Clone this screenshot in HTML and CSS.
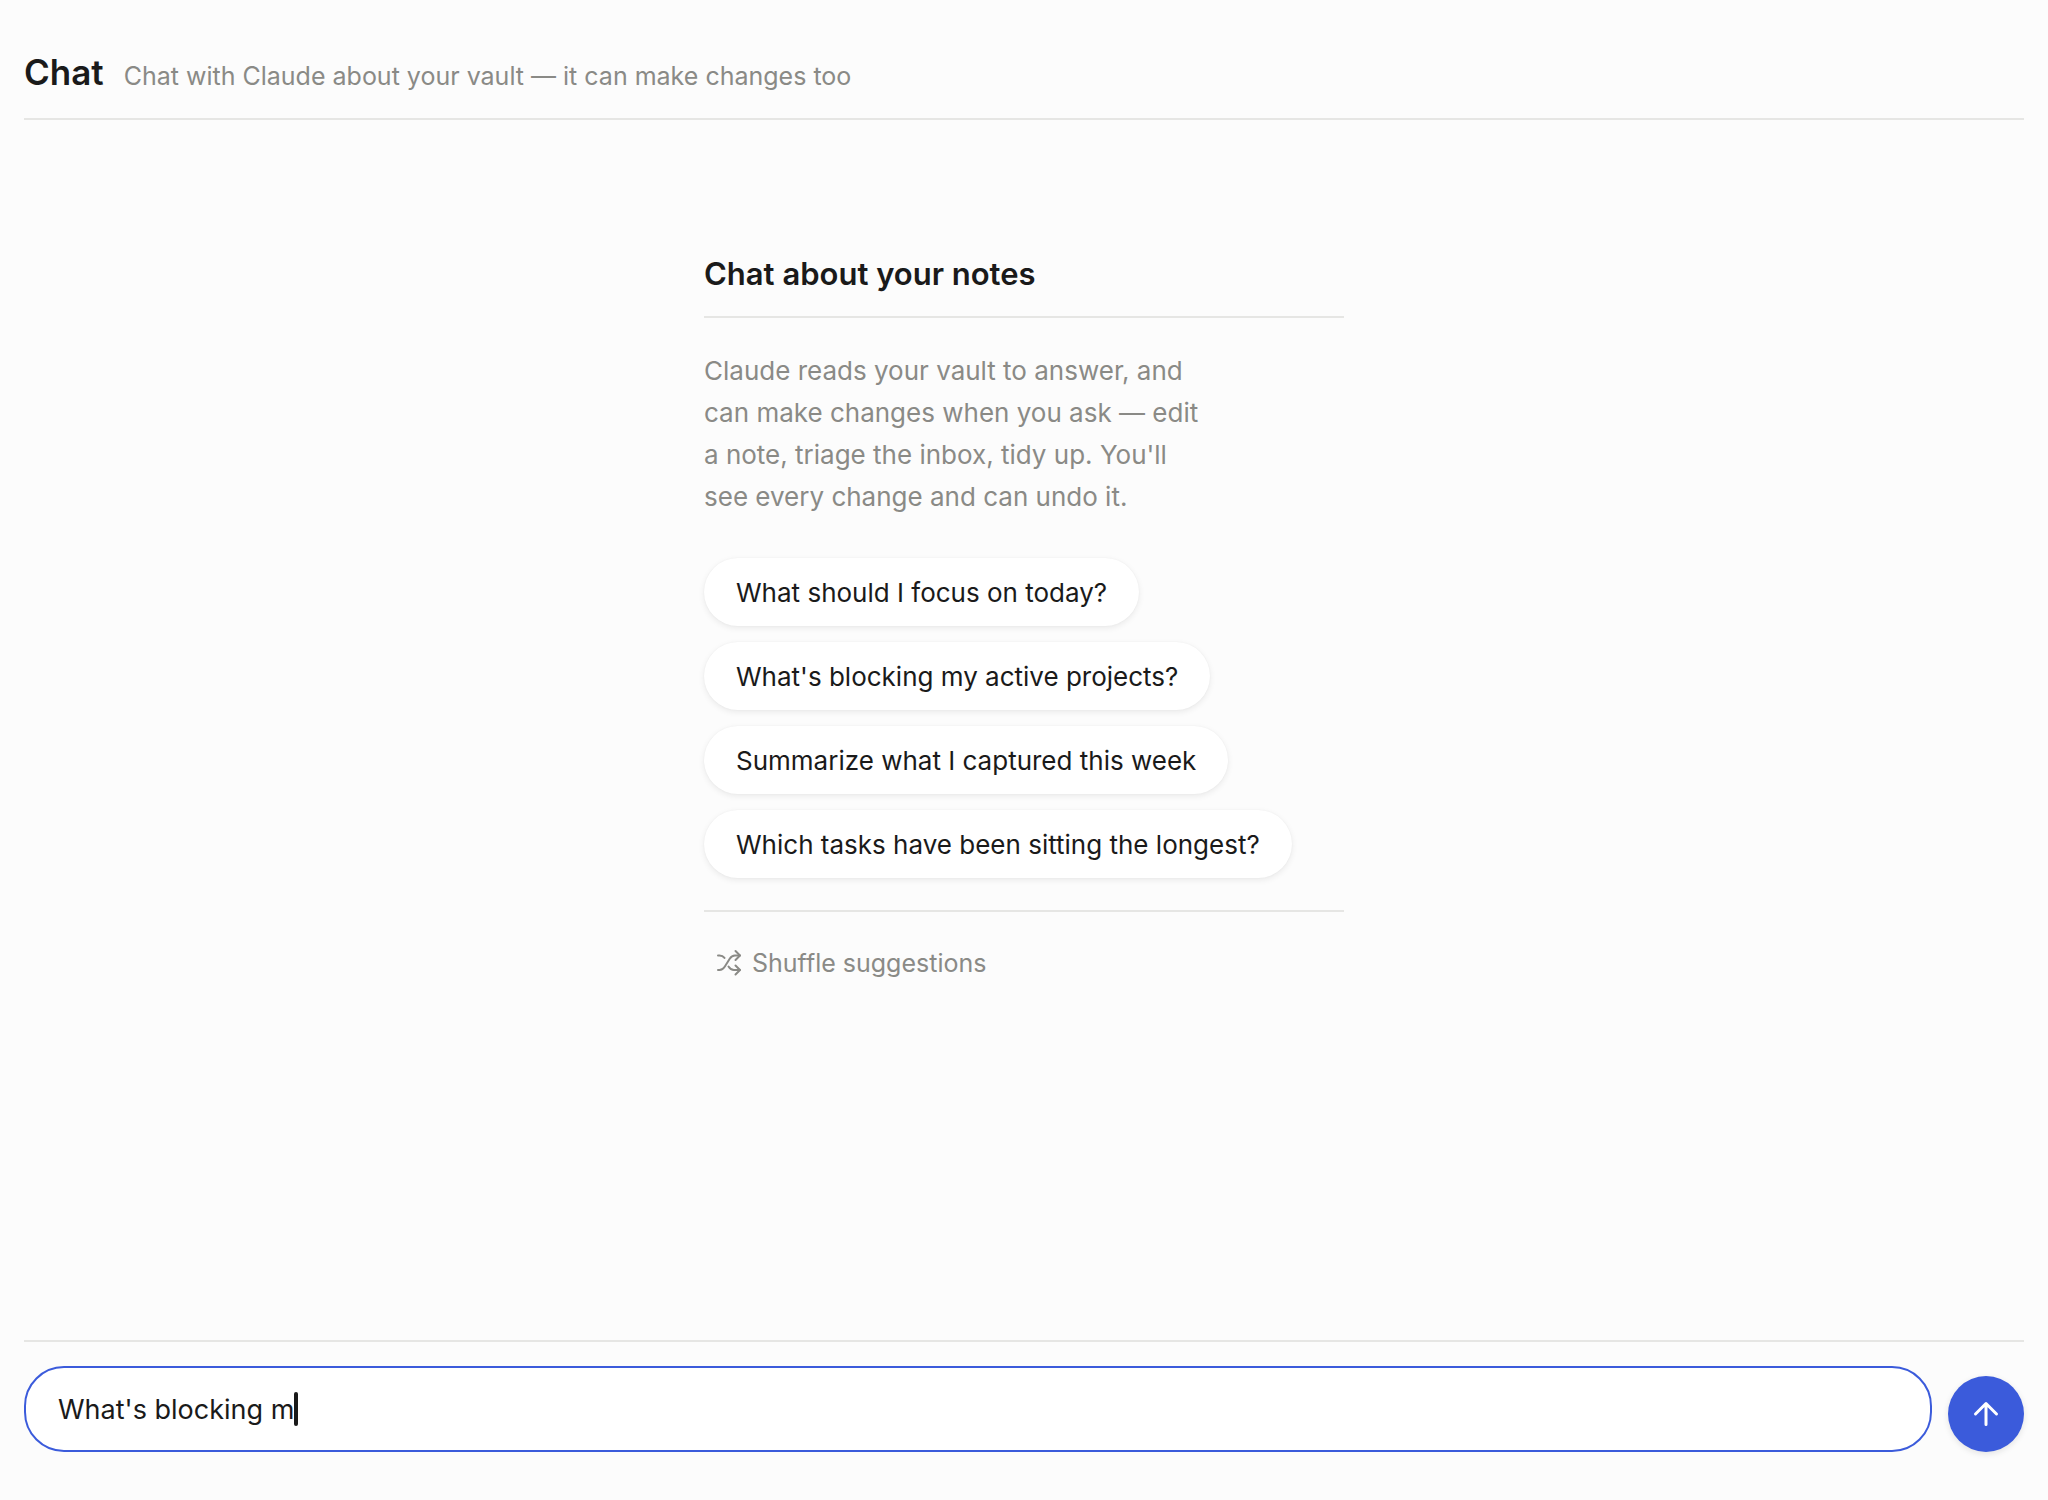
FILE: index.html
```html
<!DOCTYPE html>
<html lang="en">
  <head>
    <meta charset="utf-8">
    <meta name="viewport" content="width=device-width, initial-scale=1">
    <title>Chat</title>
    <link rel="stylesheet" href="styles.css">
  </head>
  <body>
    <header class="page-header">
      <h1>Chat</h1>
      <p>Chat with Claude about your vault — it can make changes too</p>
    </header>

    <main class="thread">
      <section class="empty">
        <h2>Chat about your notes</h2>
        <p class="intro">Claude reads your vault to answer, and can make changes when you ask — edit a note, triage the inbox, tidy up. You'll see every change and can undo it.</p>

        <div class="suggestions">
          <button type="button" class="pill">What should I focus on today?</button>
          <button type="button" class="pill">What's blocking my active projects?</button>
          <button type="button" class="pill">Summarize what I captured this week</button>
          <button type="button" class="pill">Which tasks have been sitting the longest?</button>
        </div>

        <button type="button" class="shuffle">
          <svg class="icon" viewBox="0 0 24 24" aria-hidden="true">
            <path d="M1 4.500h1.500c2.200 0 3.800.8 5 2.400"/>
            <path d="M1 19h1.500c2.400 0 4-1.300 5.200-3.200l5-8c1.300-2 2.900-3.300 5.200-3.300h5"/>
            <path d="M11.500 15.500c1.400 2.200 3 3.500 5.400 3.500h6"/>
            <path d="M18.500 0l4.500 4.500-4.500 4.500M18.500 14.500l4.500 4.500-4.500 4.500"/>
          </svg>
          Shuffle suggestions
        </button>
      </section>
    </main>

    <form class="composer">
      <label class="field">
        <input type="text" value="What's blocking m" aria-label="Message">
        <span class="caret"></span>
      </label>
      <button type="button" class="send" aria-label="Send">
        <svg class="icon" viewBox="0 0 24 24" aria-hidden="true">
          <path d="M12 22.500V1.500M1.500 12L12 1.500L22.500 12"/>
        </svg>
      </button>
    </form>
  </body>
</html>
```

FILE: styles.css
```css
* {
  box-sizing: border-box;
}

body {
  margin: 0;
  min-height: 100vh;
  padding: 0 24px 48px;
  display: flex;
  flex-direction: column;
  background: #fcfcfc;
  color: #1a1a1a;
  font-family: Inter, "Liberation Sans", sans-serif;
  font-size: 26px;
}

h1, h2, p {
  margin: 0;
}

button, input {
  font: inherit;
  color: inherit;
}

button {
  border: none;
  cursor: pointer;
}

.icon {
  width: 24px;
  height: 24px;
  overflow: visible;
  fill: none;
  stroke: currentColor;
  stroke-width: 2;
  stroke-linecap: round;
  stroke-linejoin: round;
}

.page-header {
  display: flex;
  align-items: baseline;
  gap: 20px;
  padding: 50px 0 24px;
  border-bottom: 2px solid #e6e6e4;
}

.page-header h1 {
  font-size: 35px;
  line-height: 44px;
  font-weight: 600;
}

.page-header p {
  font-size: 25px;
  color: #8a8a86;
}

/* empty state */
.thread {
  flex: 1;
}

.empty {
  max-width: 640px;
  margin: 132px auto 0;
}

.empty h2 {
  padding-bottom: 20px;
  border-bottom: 2px solid #e6e6e4;
  font-size: 31px;
  line-height: 44px;
  font-weight: 600;
}

.intro {
  max-width: 508px;
  margin: 32px 0 40px;
  font-size: 26px;
  line-height: 42px;
  color: #8a8a86;
}

.suggestions {
  display: flex;
  flex-direction: column;
  align-items: flex-start;
  gap: 16px;
  padding-bottom: 32px;
  border-bottom: 2px solid #e6e6e4;
}

.pill {
  height: 68px;
  padding: 0 32px;
  border-radius: 34px;
  background: #fff;
  box-shadow: 0 2px 6px rgba(0, 0, 0, 0.08), 0 0 2px rgba(0, 0, 0, 0.04);
}

.shuffle {
  display: flex;
  align-items: center;
  gap: 11px;
  margin-top: 22px;
  padding: 13px;
  background: none;
  font-size: 25px;
  line-height: 32px;
  color: #8a8a86;
}

/* message box */
.composer {
  display: flex;
  align-items: flex-end;
  gap: 16px;
  padding-top: 24px;
  border-top: 2px solid #e6e6e4;
}

.field {
  flex: 1;
  display: flex;
  align-items: center;
  height: 86px;
  padding: 0 32px;
  border: 2px solid #3b5bdb;
  border-radius: 40px;
  background: #fff;
  font-size: 27px;
}

.field input {
  field-sizing: content;
  padding: 0;
  border: none;
  outline: none;
  background: none;
}

.caret {
  width: 4px;
  height: 34px;
  border-radius: 2px;
  background: #1a1a1a;
}

.send {
  display: flex;
  align-items: center;
  justify-content: center;
  width: 76px;
  height: 76px;
  padding: 0;
  border-radius: 50%;
  background: #3b5bdb;
  color: #fff;
  box-shadow: 0 2px 6px rgba(0, 0, 0, 0.1);
}

.send .icon {
  stroke-width: 3;
}
```
